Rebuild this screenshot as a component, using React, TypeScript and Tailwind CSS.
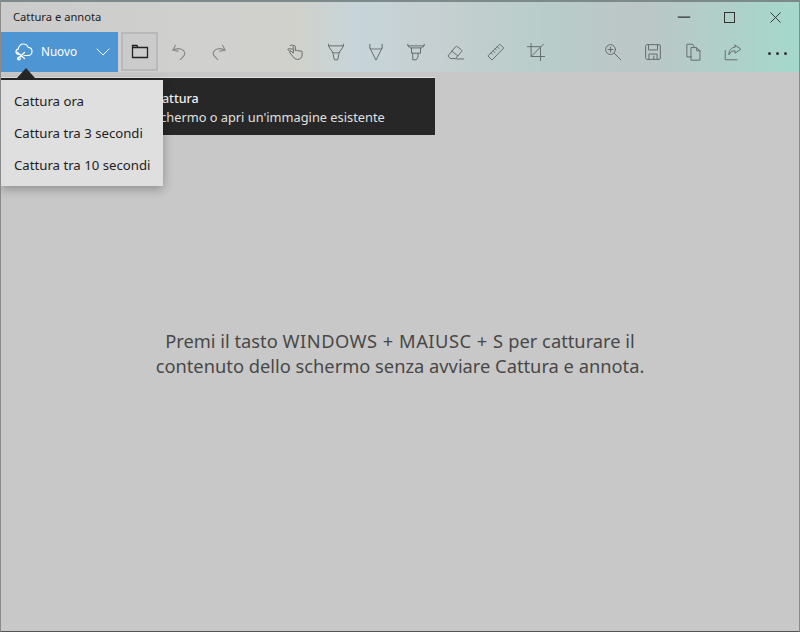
import { ChevronDown, Minus, X } from "lucide-react";

const gray = "#666c6c";

function Icon({ children }: { children: React.ReactNode }) {
  return (
    <svg width={18} height={18} viewBox="0 0 22 22" fill="none" stroke={gray} strokeWidth={1.2} strokeLinejoin="round" strokeLinecap="round">
      {children}
    </svg>
  );
}

// toolbar drawing tools, in order
const tools = [
  // touch
  <Icon key="touch">
    <path d="M6.500 7.500C4 7 1.500 6.600 1 7.400c-.5.800.8 2 3 2.600M8 3C6 2.200 3.800 2.200 3.500 3.200M7.500 12l-2.500-1.800c-1.200-.7-2.400.5-1.500 1.700l4 5c1.500 2 3.200 3.100 5.500 3.100 3.300 0 5.500-2.200 5.500-5.500v-3.500c0-1.600-2.300-1.900-2.800-.6 0-1.500-2.300-1.800-2.800-.4 0-1.500-2.300-1.600-2.700-.3V4.500c0-1.700-2.700-1.700-2.700 0z" />
  </Icon>,
  // ballpoint
  <Icon key="pen">
    <path d="M2 1.500v2.500l5 7.500 2 9h4l2-9 5-7.500V1.500M2 3.500h18M7 11.500c2.500 1 5.500 1 8 0" />
  </Icon>,
  // pencil
  <Icon key="pencil">
    <path d="M3.500 1.500v4.500l7.500 15 7.500-15V1.500M3.500 6c1 1.800 2.500 1.800 3.700.6 1 1.400 2.800 1.400 3.800 0 1 1.400 2.800 1.400 3.800 0 1.200 1.200 2.700 1.200 3.700-.6" />
  </Icon>,
  // highlighter
  <Icon key="highlighter">
    <path d="M1 1.500v2l3 2.500h14l3-2.500v-2M1.500 3.500h19M5.500 6v6.500h11V6M7 12.500V20.500h4.500l2-3.500v-4.500" />
  </Icon>,
  // eraser
  <Icon key="eraser">
    <path d="M1.500 15.500L10.500 4.500c.7-.7 1.500-.7 2.200 0l5 4c.7.600.7 1.400 0 2.100L10.500 19H4.500zM6 10l7 5.500M11 19.500h9.500" />
  </Icon>,
  // ruler
  <Icon key="ruler">
    <path d="M1.500 15.500L15.500 1.500l5 4.500L6.500 20.500zM5 12l1.500 1.500M7.500 9.500l2.200 2.200M10 7l1.500 1.500M12.500 4.500l2.200 2.200" />
  </Icon>,
  // crop
  <Icon key="crop">
    <path d="M0.500 4.500h16V21.500M5 0.500V16.500H21.500M5 16.500L20 1.500" />
  </Icon>,
];

const actions = [
  // zoom
  <Icon key="zoom">
    <circle cx="8" cy="8" r="6" />
    <path d="M8 5v6M5 8h6M12.500 12.500l8 8" />
  </Icon>,
  // save
  <Icon key="save">
    <path d="M2 3.500c0-.8.600-1.500 1.500-1.500h15c.9 0 1.500.7 1.500 1.500v15c0 .8-.6 1.500-1.500 1.500h-15c-.9 0-1.500-.7-1.500-1.500zM5.500 2v6.500h11V2M6 20v-6.500h10V20M12 16v4" />
  </Icon>,
  // copy
  <Icon key="copy">
    <path d="M9 17H3.500V1.500H10.500l2 3M8.500 6v15h11V9.500L15.500 6zM15.500 6v3.500h4" />
  </Icon>,
  // share
  <Icon key="share">
    <path d="M1.500 9v11.500h14.500M13.500 2.500l7 5-7 5V9.500c-3.500 0-6 1.500-7.500 5 0-5.500 3-9 7.500-9.500z" />
  </Icon>,
];

export default function App() {
  return (
    <div className="relative flex h-[632px] w-[800px] flex-col overflow-hidden border-x border-b border-t-2 border-x-[#8a8a8a] border-b-[#555] border-t-[#7d8a8c] bg-[#c8c8c8] font-['Noto_Sans',sans-serif] text-[#333]">
      <div className="bg-[linear-gradient(90deg,#cbcbcb_0%,#d0d0cf_25%,#d0d1cb_37%,#c6d4d9_45%,#c6cfd1_55%,#b8cdc9_68%,#bcc6c6_80%,#a5d8cb_100%)]">
        {/* Title bar */}
        <div className="flex h-[30px] items-center justify-between">
          <span className="pl-3 text-[11.200px] text-[#222]">Cattura e annota</span>
          <div className="flex items-center text-[#333]">
            <div className="flex w-[46px] justify-center">
              <Minus size={20} strokeWidth={1.5} />
            </div>
            <div className="flex w-[45px] justify-center">
              <span className="size-[11px] border border-[#333]" />
            </div>
            <div className="flex w-[47px] justify-center">
              <X size={19} strokeWidth={1.2} />
            </div>
          </div>
        </div>

        {/* Toolbar */}
        <div className="flex h-[40px] items-start">
          <div className="flex h-[40px] w-[117px] items-center bg-[#4e96d3] pl-[14px] text-white">
            <svg width="18" height="18" viewBox="0 0 18 18" fill="none" stroke="#fff" strokeWidth={1.2} strokeLinecap="round" strokeLinejoin="round" className="mt-[-1px]">
              <path d="M5 11.500H3.500C2 11.500 1 10.200 1 8.800c0-1.500 1-2.500 2.300-2.700C3.700 3 6 1 8.500 1c2.300 0 4 1.500 4.700 3.400 2.300.2 3.800 2 3.800 4 0 2.200-1.600 4.100-4 4.100H9" />
              <path d="M2.500 16l7-6.500M2.500 9.500l7 6" />
              <circle cx="4" cy="15.500" r="1.300" />
            </svg>
            <span className="ml-[8px] text-[11.700px]">Nuovo</span>
            <ChevronDown size={24} strokeWidth={1} className="ml-[14px]" />
          </div>
          <div className="ml-[3px] flex h-[39px] w-[37px] items-center justify-center border-2 border-[#b9b9b9] bg-[#cbcbcb]">
            <svg width="18" height="16" viewBox="0 0 18 16" fill="none" stroke="#222" strokeWidth={1.3}>
              <path d="M1.500 3.500V13.500h15V3.500H7L6 1.500H1.500zM1.500 3.500H7" />
            </svg>
          </div>

          <div className="ml-[13px] flex h-full items-center gap-[24px]">
            <svg width="16" height="16" viewBox="0 0 18 18" fill="none" stroke="#868a8a" strokeWidth={1.3} strokeLinecap="round" strokeLinejoin="round">
              <path d="M5 1.500L2 7l6 1M2 7c6-3.500 13-1.500 13.500 3.500.2 2.500-2.500 4.500-5 7" />
            </svg>
            <svg width="16" height="16" viewBox="0 0 18 18" fill="none" stroke="#868a8a" strokeWidth={1.3} strokeLinecap="round" strokeLinejoin="round">
              <path d="M13 1.500L16 7l-6 1M16 7C10 3.500 3 5.500 2.500 10.500c-.2 2.500 2.500 4.500 5 7" />
            </svg>
          </div>

          <div className="ml-[60px] flex h-full items-center gap-[22px]">{tools}</div>
          <div className="ml-[59px] flex h-full items-center gap-[22px]">{actions}</div>
          <div className="ml-[26px] flex h-full items-center gap-[5px] pt-[3px]">
            <span className="size-[3px] rounded-full bg-[#333]" />
            <span className="size-[3px] rounded-full bg-[#333]" />
            <span className="size-[3px] rounded-full bg-[#333]" />
          </div>
        </div>
      </div>

      {/* Empty state */}
      <main className="flex flex-1 items-center justify-center pt-[2px]">
        <p className="text-center text-[18.300px] leading-[25px] text-[#484848]">
          Premi il tasto <span className="tracking-[0.5px]">WINDOWS + MAIUSC + S</span> per catturare il
          <br />
          contenuto dello schermo senza avviare Cattura e annota.
        </p>
      </main>

      {/* Tooltip behind the menu */}
      <div className="absolute left-0 top-[75px] h-[58px] w-[434px] border-t border-[#e2e2e2] bg-[#272727] pl-[153px] pt-[11px] text-[#e0e0e0]">
        <div className="text-[12.500px] font-medium leading-[19px] text-[#f0f0f0]">Cattura</div>
        <div className="text-[12.800px] leading-[19px]">schermo o apri un'immagine esistente</div>
      </div>
      <div className="absolute left-[16px] top-[66px] size-0 border-x-[9px] border-b-[10px] border-x-transparent border-b-[#272727]" />

      {/* Dropdown menu */}
      <div className="absolute left-0 top-[78px] z-10 flex h-[106px] w-[162px] flex-col justify-center bg-[#dfdfdf] pl-[13px] pt-[2px] text-[13.200px] text-[#222] shadow-[0_3px_10px_rgba(0,0,0,0.3)]">
        <div className="flex h-[32px] items-center">Cattura ora</div>
        <div className="flex h-[32px] items-center">Cattura tra 3 secondi</div>
        <div className="flex h-[32px] items-center">Cattura tra 10 secondi</div>
      </div>
    </div>
  );
}
